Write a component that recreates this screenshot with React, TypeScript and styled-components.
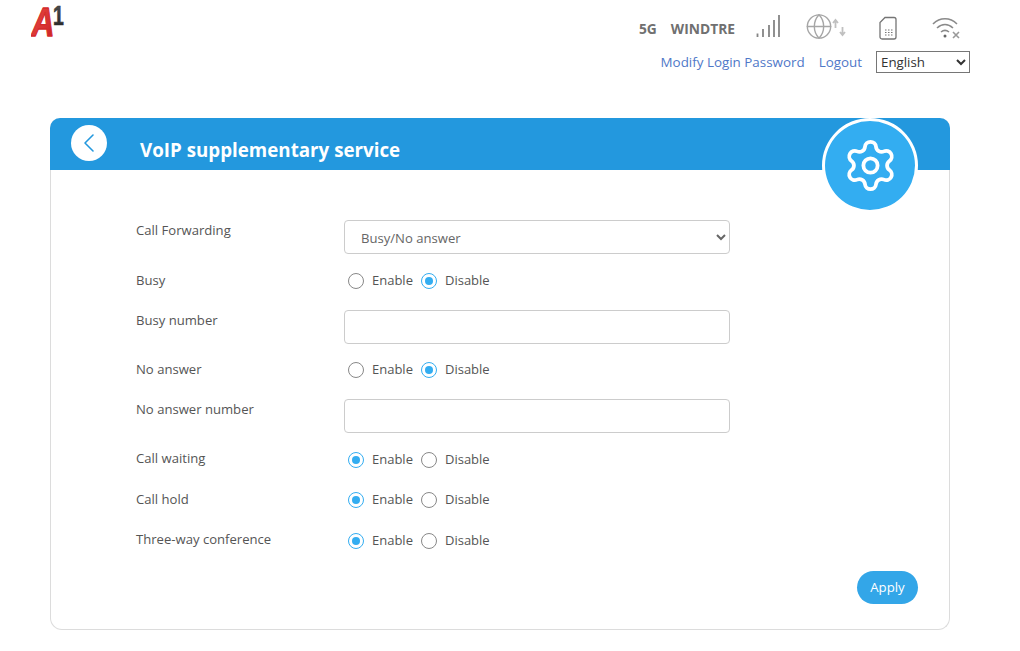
import React from "react";
import styled, { createGlobalStyle } from "styled-components";
import { Settings, ChevronLeft, Globe } from "lucide-react";

const Global = createGlobalStyle`
  html, body { margin: 0; padding: 0; background: #fff; }
  body { font-family: "Open Sans", "Noto Sans", "Liberation Sans", sans-serif; color: #555; }
`;

const Page = styled.div`
  width: 1020px;
  height: 651px;
  overflow: hidden;
  display: flex;
  flex-direction: column;
`;

const TopBar = styled.header`
  height: 118px;
  padding: 0 50px 0 31px;
  display: flex;
  justify-content: space-between;
  align-items: flex-start;
`;

const Logo = styled.svg`
  width: 48px;
  height: 40px;
  margin-top: 2px;
  display: block;
`;

const TopRight = styled.div`
  display: flex;
  flex-direction: column;
  align-items: flex-end;
`;

const StatusRow = styled.div`
  height: 51px;
  display: flex;
  align-items: flex-start;
  padding: 14px 8px 0 0;
  box-sizing: border-box;
`;

const StatusText = styled.span<{ $gap: number }>`
  font-size: 13.8px;
  font-weight: 700;
  color: #707070;
  line-height: 30px;
  margin-right: ${(p) => p.$gap}px;
`;

const IconSlot = styled.span<{ $width: number; $gap: number }>`
  width: ${(p) => p.$width}px;
  height: 28px;
  margin-right: ${(p) => p.$gap}px;
  display: block;
  svg { display: block; overflow: visible; }
`;

const LinkRow = styled.div`
  height: 22px;
  display: flex;
  align-items: center;
`;

const TopLink = styled.a<{ $gap: number }>`
  font-size: 13.4px;
  color: #4f78c8;
  text-decoration: none;
  margin-right: ${(p) => p.$gap}px;
`;

const LangSelect = styled.select`
  width: 94px;
  height: 22px;
  font-family: inherit;
  font-size: 13.3px;
  color: #333;
  background: #fff;
  border: 1px solid #767676;
  border-radius: 0;
  padding: 0;
`;

const Card = styled.main`
  position: relative;
  margin-left: 50px;
  width: 900px;
  height: 512px;
  box-sizing: border-box;
  border: 1px solid #dcdcdc;
  border-top: none;
  border-radius: 10px 10px 12px 12px;
  display: flex;
  flex-direction: column;
`;

const CardHeader = styled.div`
  height: 52px;
  margin: 0 -1px;
  background: #2398de;
  border-radius: 10px 10px 0 0;
  display: flex;
  align-items: flex-start;
  padding-left: 21px;
`;

const BackButton = styled.button`
  width: 36px;
  height: 36px;
  margin-top: 7px;
  padding: 0;
  border: none;
  border-radius: 50%;
  background: #fff;
  color: #2398de;
  display: flex;
  align-items: center;
  justify-content: center;
`;

const Title = styled.h1`
  margin: 18px 0 0 33px;
  font-size: 18.75px;
  line-height: 28px;
  font-weight: 700;
  color: #fff;
`;

const Badge = styled.div`
  position: absolute;
  top: 0;
  right: 31px;
  width: 96px;
  height: 95px;
  box-sizing: border-box;
  border: 3px solid #fff;
  border-radius: 50%;
  background: #33adf1;
  color: #fff;
  display: flex;
  align-items: center;
  justify-content: center;
`;

const Form = styled.form`
  flex: 1;
  padding: 50px 31px 0 85px;
  display: flex;
  flex-direction: column;
`;

const Row = styled.div<{ $top: number; $height: number }>`
  margin-top: ${(p) => p.$top}px;
  height: ${(p) => p.$height}px;
  display: flex;
  align-items: flex-start;
`;

const Label = styled.label<{ $shift?: number }>`
  width: 208px;
  font-size: 13.1px;
  line-height: 20px;
  color: #555;
  margin-top: ${(p) => p.$shift ?? 0}px;
`;

const BigSelect = styled.select`
  width: 386px;
  height: 34px;
  box-sizing: border-box;
  font-family: inherit;
  font-size: 13.1px;
  color: #666;
  background: #fff;
  border: 1px solid #ccc;
  border-radius: 4px;
  padding: 2px 12px 0;
`;

const TextInput = styled.input`
  width: 386px;
  height: 34px;
  box-sizing: border-box;
  background: #fff;
  border: 1px solid #ccc;
  border-radius: 4px;
  padding: 0 12px;
`;

const RadioGroup = styled.div`
  display: flex;
  align-items: center;
  height: 20px;
`;

const RadioLabel = styled.span`
  display: inline-flex;
  align-items: center;
  font-size: 13px;
  color: #555;
  margin-right: 4px;
`;

const RadioDot = styled.span<{ $on: boolean }>`
  width: 16px;
  height: 16px;
  box-sizing: border-box;
  margin: 1px 8px 0 4px;
  border-radius: 50%;
  border: 1px solid ${(p) => (p.$on ? "#33adf1" : "#888")};
  display: flex;
  align-items: center;
  justify-content: center;
  &::after {
    content: "";
    width: 8px;
    height: 8px;
    border-radius: 50%;
    background: ${(p) => (p.$on ? "#33adf1" : "transparent")};
  }
`;

const Actions = styled.div`
  display: flex;
  justify-content: flex-end;
  margin-top: 21px;
`;

const Apply = styled.button`
  width: 61px;
  height: 33px;
  border: none;
  border-radius: 17px;
  background: #33a6e8;
  color: #fff;
  font-family: inherit;
  font-size: 13.2px;
  padding: 0 0 2px;
`;

const Radios = ({ on }: { on: "Enable" | "Disable" }) => (
  <RadioGroup>
    <RadioLabel><RadioDot $on={on === "Enable"} />Enable</RadioLabel>
    <RadioLabel><RadioDot $on={on === "Disable"} />Disable</RadioLabel>
  </RadioGroup>
);

export default function App() {
  return (
    <Page>
      <Global />
      <TopBar>
        <Logo viewBox="0 0 48 40">
          <defs>
            <linearGradient id="red" x1="0" y1="0" x2="1" y2="1">
              <stop offset="0" stopColor="#ee5049" />
              <stop offset="1" stopColor="#c81e22" />
            </linearGradient>
            <linearGradient id="dark" x1="0" y1="0" x2="0" y2="1">
              <stop offset="0" stopColor="#555" />
              <stop offset="1" stopColor="#222" />
            </linearGradient>
          </defs>
          <text transform="translate(22 22.500) scale(0.72 1)" fontFamily="Liberation Sans" fontWeight="700" fontSize="27" fill="url(#dark)" stroke="#333" strokeWidth="0.7">1</text>
          <text transform="translate(0.500 33.500) scale(0.86 1.08)" fontFamily="Liberation Sans" fontWeight="700" fontStyle="italic" fontSize="37" fill="url(#red)" stroke="#d42a2a" strokeWidth="1.200" strokeLinejoin="round">A</text>
        </Logo>
        <TopRight>
          <StatusRow>
            <StatusText $gap={14}>5G</StatusText>
            <StatusText $gap={21}>WINDTRE</StatusText>
            <IconSlot $width={25} $gap={26}>
              <svg width="25" height="28" viewBox="0 0 25 28" fill="none" stroke="#858585" strokeWidth="1.800">
                <path d="M1.500 23v-3.500M7 23v-8M13 23v-12M18 23v-17M23 23V1" />
              </svg>
            </IconSlot>
            <IconSlot $width={40} $gap={32}>
              <svg width="40" height="28" viewBox="0 0 40 28" fill="none">
                <Globe x={-2} y={-1.500} width={28} height={28} color="#a6a6a6" strokeWidth={1.2} />
                <path d="M26 9l2.500-3 2.500 3M28.500 6v8" stroke="#c0c0c0" strokeWidth="1.800" />
                <path d="M33 18l2.500 3 2.500-3M35.500 13v8" stroke="#c0c0c0" strokeWidth="1.800" />
              </svg>
            </IconSlot>
            <IconSlot $width={18} $gap={35}>
              <svg width="18" height="28" viewBox="0 0 18 28" fill="none" stroke="#757575" strokeWidth="1.300">
                <path d="M6 3.500h9a2 2 0 0 1 2 2v17.500a2 2 0 0 1-2 2H3a2 2 0 0 1-2-2V8.500z" />
                <path d="M6 16h1.500M9 16h1.500M12 16h1.500M6 18.500h1.500M9 18.500h1.500M12 18.500h1.500M6 21h1.500M9 21h1.500M12 21h1.500" strokeWidth="1.200" />
              </svg>
            </IconSlot>
            <IconSlot $width={30} $gap={0}>
              <svg width="30" height="28" viewBox="0 0 30 28" fill="none" stroke="#8a8a8a" strokeWidth="1.600">
                <path d="M1 10c7-7 17-7 24 0" />
                <path d="M5 14c5-4.500 11-4.500 16 0" />
                <path d="M9 18c3-2.500 5-2.500 8 0" />
                <circle cx="13" cy="22" r="1.500" fill="#666" stroke="none" />
                <path d="M21 18l6 6M27 18l-6 6" stroke="#999" />
              </svg>
            </IconSlot>
          </StatusRow>
          <LinkRow>
            <TopLink href="#" $gap={14}>Modify Login Password</TopLink>
            <TopLink href="#" $gap={14}>Logout</TopLink>
            <LangSelect defaultValue="English"><option>English</option></LangSelect>
          </LinkRow>
        </TopRight>
      </TopBar>
      <Card>
        <CardHeader>
          <BackButton type="button" aria-label="Back"><ChevronLeft size={32} strokeWidth={1.2} /></BackButton>
          <Title>VoIP supplementary service</Title>
        </CardHeader>
        <Badge><Settings size={57} strokeWidth={1.6} /></Badge>
        <Form>
          <Row $top={0} $height={34}>
            <Label>Call Forwarding</Label>
            <BigSelect defaultValue="Busy/No answer"><option>Busy/No answer</option></BigSelect>
          </Row>
          <Row $top={16} $height={20}>
            <Label>Busy</Label>
            <Radios on="Disable" />
          </Row>
          <Row $top={20} $height={34}>
            <Label>Busy number</Label>
            <TextInput />
          </Row>
          <Row $top={15} $height={20}>
            <Label>No answer</Label>
            <Radios on="Disable" />
          </Row>
          <Row $top={20} $height={34}>
            <Label>No answer number</Label>
            <TextInput />
          </Row>
          <Row $top={16} $height={20}>
            <Label $shift={-1}>Call waiting</Label>
            <Radios on="Enable" />
          </Row>
          <Row $top={20} $height={20}>
            <Label>Call hold</Label>
            <Radios on="Enable" />
          </Row>
          <Row $top={21} $height={20}>
            <Label $shift={-1}>Three-way conference</Label>
            <Radios on="Enable" />
          </Row>
          <Actions><Apply type="button">Apply</Apply></Actions>
        </Form>
      </Card>
    </Page>
  );
}
